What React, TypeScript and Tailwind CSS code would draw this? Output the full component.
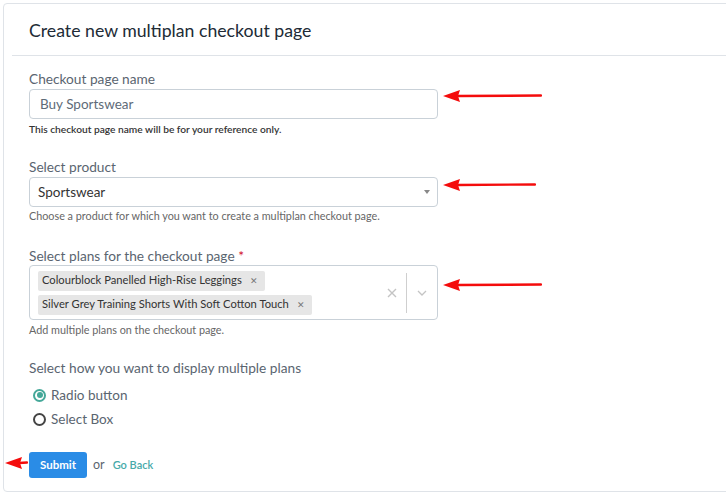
import React from 'react'

function Arrow({ x, y, len }: { x: number; y: number; len: number }) {
  return (
    <svg
      className="absolute"
      style={{ left: x, top: y - 7 }}
      width={len}
      height={14}
      viewBox={`0 0 ${len} 14`}
    >
      <polygon points={`0,7 17,1 15,7 17,13`} fill="#f40c0c" />
      <line x1={14} y1={7} x2={len - 1} y2={6.5} stroke="#f40c0c" strokeWidth={2.4} strokeLinecap="round" />
    </svg>
  )
}

function Tag({ label }: { label: string }) {
  return (
    <div className="flex h-[20px] items-center gap-[8px] rounded-[2px] bg-[#e6e6e6] pl-[4px] pr-[7px] text-[11.2px] text-[#333]">
      <span>{label}</span>
      <span className="text-[9px] text-[#777]">✕</span>
    </div>
  )
}

export default function App() {
  return (
    <div className="relative h-[495px] w-[726px] overflow-hidden bg-white font-['Lato',sans-serif]">
      <div className="ml-[3px] mt-[3px] h-[489px] w-[760px] rounded-tl-[4px] rounded-bl-[4px] border border-[#dfe3e8]">
        {/* Header */}
        <div className="ml-[8px] flex h-[52px] items-center border-b border-[#dfe3e8] pl-[17px] pt-[4px]">
          <h1 className="text-[17.7px] text-[#212b36]">Create new multiplan checkout page</h1>
        </div>

        {/* Body */}
        <div className="pl-[25px] pt-[14px]">
          <div className="w-[409px]">
            <label className="block text-[13.7px] leading-[18px] text-[#5a6570]">Checkout page name</label>
            <div className="mt-[1px] flex h-[30px] items-center rounded-[4px] border border-[#c9d1d8] px-[10px] text-[13.5px] text-[#5e6b78]">
              Buy Sportswear
            </div>
            <p className="mt-[3px] text-[10.2px] font-semibold leading-[14px] text-[#333]">
              This checkout page name will be for your reference only.
            </p>

            <label className="mt-[22px] block text-[13.7px] leading-[18px] text-[#5a6570]">Select product</label>
            <div className="mt-[1px] flex h-[30px] items-center justify-between rounded-[4px] border border-[#c9d1d8] pl-[8px] pr-[7px] text-[13.5px] text-[#333]">
              <span>Sportswear</span>
              <svg width="6" height="4" viewBox="0 0 6 4">
                <polygon points="0,0 6,0 3,4" fill="#888" />
              </svg>
            </div>
            <p className="mt-[2px] text-[10.8px] leading-[14px] text-[#666]">
              Choose a product for which you want to create a multiplan checkout page.
            </p>

            <label className="mt-[24px] block text-[13.7px] leading-[18px] text-[#5a6570]">
              Select plans for the checkout page <span className="text-[#d0021b]">*</span>
            </label>
            <div className="flex h-[55px] items-center rounded-[4px] border border-[#c9d1d8]">
              <div className="flex flex-1 flex-col items-start gap-[4px] pl-[8px]">
                <Tag label="Colourblock Panelled High-Rise Leggings" />
                <Tag label="Silver Grey Training Shorts With Soft Cotton Touch" />
              </div>
              <div className="flex h-[40px] items-center">
                <svg width="10" height="10" viewBox="0 0 10 10" className="mr-[9px]">
                  <path d="M1 1 L9 9 M9 1 L1 9" stroke="#c4c4c4" strokeWidth="1.4" />
                </svg>
                <div className="h-full w-px bg-[#cfcfcf]" />
                <svg width="10" height="6" viewBox="0 0 10 6" className="ml-[10px] mr-[10px]">
                  <path d="M1 1 L5 5 L9 1" stroke="#c4c4c4" strokeWidth="1.3" fill="none" />
                </svg>
              </div>
            </div>
            <p className="mt-[3px] text-[10.8px] leading-[14px] text-[#666]">Add multiple plans on the checkout page.</p>

            <p className="mt-[22px] text-[13.7px] leading-[18px] text-[#5a6570]">
              Select how you want to display multiple plans
            </p>
            <div className="mt-[6px] flex h-[24px] items-center gap-[5px] pl-[4px]">
              <span className="flex h-[13px] w-[13px] items-center justify-center rounded-full border-2 border-[#45a899]">
                <span className="h-[6px] w-[6px] rounded-full bg-[#45a899]" />
              </span>
              <span className="text-[13.5px] text-[#5a6570]">Radio button</span>
            </div>
            <div className="flex h-[24px] items-center gap-[5px] pl-[4px]">
              <span className="h-[13px] w-[13px] rounded-full border-2 border-[#444]" />
              <span className="text-[13.5px] text-[#5a6570]">Select Box</span>
            </div>

            <div className="mt-[21px] flex items-center gap-[6px]">
              <button className="h-[26px] w-[58px] rounded-[3px] bg-[#2a8ce6] text-[11.5px] font-bold text-white">
                Submit
              </button>
              <span className="text-[12.5px] text-[#5a6570]">or</span>
              <span className="ml-[2px] text-[11px] font-semibold text-[#47aaa9]">Go Back</span>
            </div>
          </div>
        </div>
      </div>

      <Arrow x={443} y={96} len={99} />
      <Arrow x={443} y={185} len={93} />
      <Arrow x={443} y={285} len={99} />
      <Arrow x={5} y={463} len={23} />
    </div>
  )
}
